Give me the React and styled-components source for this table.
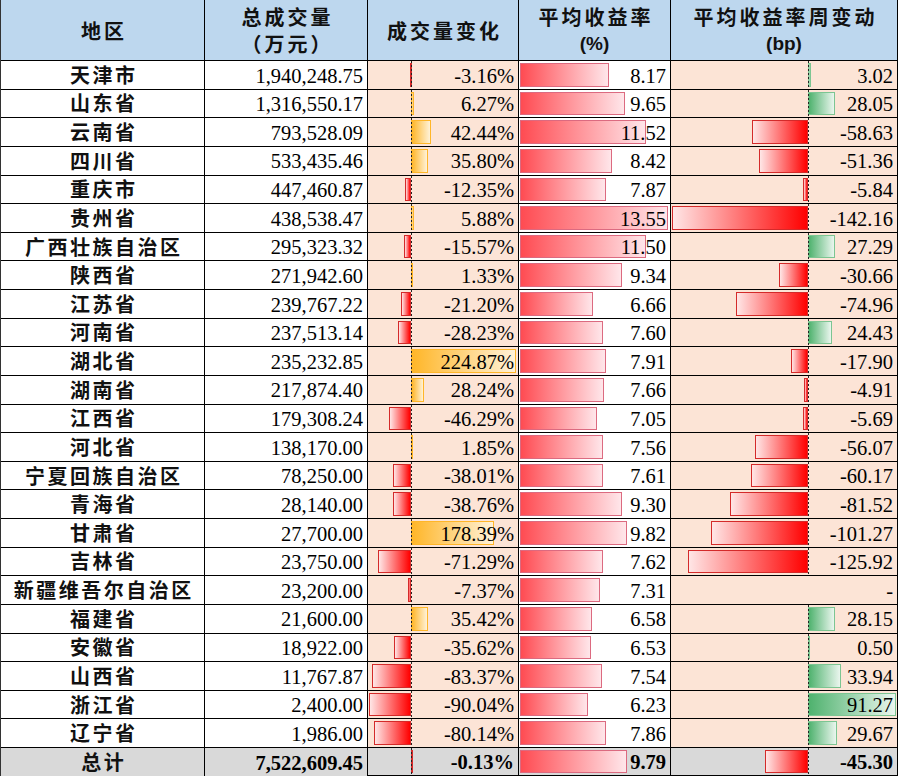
import React from "react";
import styled, { createGlobalStyle } from "styled-components";

const rows = [
	["天津市", "1,940,248.75", -3.16, 8.17, 3.02],
	["山东省", "1,316,550.17", 6.27, 9.65, 28.05],
	["云南省", "793,528.09", 42.44, 11.52, -58.63],
	["四川省", "533,435.46", 35.8, 8.42, -51.36],
	["重庆市", "447,460.87", -12.35, 7.87, -5.84],
	["贵州省", "438,538.47", 5.88, 13.55, -142.16],
	["广西壮族自治区", "295,323.32", -15.57, 11.5, 27.29],
	["陕西省", "271,942.60", 1.33, 9.34, -30.66],
	["江苏省", "239,767.22", -21.2, 6.66, -74.96],
	["河南省", "237,513.14", -28.23, 7.6, 24.43],
	["湖北省", "235,232.85", 224.87, 7.91, -17.9],
	["湖南省", "217,874.40", 28.24, 7.66, -4.91],
	["江西省", "179,308.24", -46.29, 7.05, -5.69],
	["河北省", "138,170.00", 1.85, 7.56, -56.07],
	["宁夏回族自治区", "78,250.00", -38.01, 7.61, -60.17],
	["青海省", "28,140.00", -38.76, 9.3, -81.52],
	["甘肃省", "27,700.00", 178.39, 9.82, -101.27],
	["吉林省", "23,750.00", -71.29, 7.62, -125.92],
	["新疆维吾尔自治区", "23,200.00", -7.37, 7.31, null],
	["福建省", "21,600.00", 35.42, 6.58, 28.15],
	["安徽省", "18,922.00", -35.62, 6.53, 0.5],
	["山西省", "11,767.87", -83.37, 7.54, 33.94],
	["浙江省", "2,400.00", -90.04, 6.23, 91.27],
	["辽宁省", "1,986.00", -80.14, 7.86, 29.67],
];

const total = ["总计", "7,522,609.45", -0.13, 9.79, -45.3];

// bar ranges per column (px inside the cell)
const volScale = { min: -90.04, max: 224.87, start: 1, width: 147 };
const rateScale = { min: 0, max: 13.55, start: 1, width: 148 };
const bpScale = { min: -142.16, max: 91.27, start: 1, width: 224 };

const geom = (v, s) => {
	const span = s.max - s.min;
	const axis = s.start + (s.width * -s.min) / span;
	const w = (Math.abs(v) / span) * s.width;
	return { axis, left: v < 0 ? axis - w : axis, w };
};

const BarCell = ({ value, scale, text, posTone, bg, bold }) => {
	if (value === null) {
		return (
			<Cell $bg={bg} $bold={bold}>
				<Num>-</Num>
			</Cell>
		);
	}
	const g = geom(value, scale);
	return (
		<Cell $bg={bg} $bold={bold}>
			<Bar
				$tone={value < 0 ? "neg" : posTone}
				style={{ left: g.left, width: g.w }}
			/>
			{scale.min < 0 ? <Axis style={{ left: Math.round(g.axis) }} /> : null}
			<Num>{text}</Num>
		</Cell>
	);
};

const DataRow = ({ r, isTotal }) => {
	const bg = isTotal ? "#d9d9d9" : null;
	const peach = isTotal ? "#d9d9d9" : "#fce4d6";
	return (
		<>
			<Cell $bg={bg} $center $last={isTotal}>
				<Region>{r[0]}</Region>
			</Cell>
			<Cell $bg={bg} $bold={isTotal} $last={isTotal}>
				<Num>{r[1]}</Num>
			</Cell>
			<BarCell
				value={r[2]}
				scale={volScale}
				text={`${r[2].toFixed(2)}%`}
				posTone="orange"
				bg={peach}
				bold={isTotal}
			/>
			<BarCell
				value={r[3]}
				scale={rateScale}
				text={r[3].toFixed(2)}
				posTone="rate"
				bg={bg}
				bold={isTotal}
			/>
			<BarCell
				value={r[4]}
				scale={bpScale}
				text={r[4] === null ? "-" : r[4].toFixed(2)}
				posTone="green"
				bg={peach}
				bold={isTotal}
			/>
		</>
	);
};

const App = () => {
	return (
		<>
			<GlobalStyle />
			<Sheet>
				<HeadCell>
					<HeadLine>地区</HeadLine>
				</HeadCell>
				<HeadCell>
					<HeadLine>总成交量</HeadLine>
					<HeadLine>（万元）</HeadLine>
				</HeadCell>
				<HeadCell>
					<HeadLine>成交量变化</HeadLine>
				</HeadCell>
				<HeadCell>
					<HeadLine>平均收益率</HeadLine>
					<HeadUnit>(%)</HeadUnit>
				</HeadCell>
				<HeadCell>
					<HeadLine>平均收益率周变动</HeadLine>
					<HeadUnit>(bp)</HeadUnit>
				</HeadCell>
				{rows.map((r) => (
					<DataRow key={r[0]} r={r} />
				))}
				<DataRow r={total} isTotal />
			</Sheet>
		</>
	);
};

export default App;

const GlobalStyle = createGlobalStyle`
	body {
		margin: 0;
		background: #ffffff;
	}
`;

const Sheet = styled.div`
	display: grid;
	grid-template-columns: 204px 163px 151px 152px 227px;
	grid-template-rows: 61px repeat(24, 28.625px) 28px;
	width: 898px;
	border-left: 1px solid #333;
	box-sizing: border-box;
`;

const HeadCell = styled.div`
	display: flex;
	flex-direction: column;
	align-items: center;
	justify-content: center;
	background: #bdd7ee;
	border-right: 1px solid #000;
	border-bottom: 1px solid #000;
	box-sizing: border-box;
	font-family: "Noto Sans CJK SC", sans-serif;
	font-weight: 700;
	color: #111;
`;

const HeadLine = styled.div`
	font-size: 20px;
	line-height: 27px;
	letter-spacing: 3px;
	padding-left: 3px;
`;

const HeadUnit = styled.div`
	font-family: "Liberation Sans", "Noto Sans CJK SC", sans-serif;
	font-size: 19px;
	line-height: 27px;
`;

const Cell = styled.div`
	position: relative;
	display: flex;
	align-items: center;
	justify-content: ${(p) => (p.$center ? "center" : "flex-end")};
	padding-right: ${(p) => (p.$center ? "0" : "4px")};
	background: ${(p) => p.$bg || "#ffffff"};
	border-right: 1px solid #000;
	border-bottom: ${(p) => (p.$last ? "none" : "1px solid #000")};
	box-sizing: border-box;
	overflow: hidden;
	font-weight: ${(p) => (p.$bold ? 700 : 400)};
`;

const Region = styled.span`
	font-family: "Noto Sans CJK SC", sans-serif;
	font-size: 20px;
	font-weight: 700;
	letter-spacing: 2.5px;
	padding-left: 2.5px;
	line-height: 1;
	color: #111;
`;

const Num = styled.span`
	position: relative;
	z-index: 2;
	font-family: "Liberation Serif", "Times New Roman", serif;
	font-size: 20.5px;
	line-height: 1;
	padding-top: 2px;
	color: #000;
`;

const tones = {
	neg: "linear-gradient(to right, #ffe6e6, #ff0000)",
	orange: "linear-gradient(to right, #ffb628, #fff2d8)",
	rate: "linear-gradient(to right, #ff4b52, #ffe6ea)",
	green: "linear-gradient(to right, #4fb26e, #eaf6ee)",
};

const toneBorders = {
	neg: "#d42a2a",
	orange: "#ffb628",
	rate: "#dc6a80",
	green: "#7cc592",
};

const Bar = styled.div`
	position: absolute;
	top: 2px;
	bottom: 2px;
	box-sizing: border-box;
	background: ${(p) => tones[p.$tone]};
	border: 1px solid ${(p) => toneBorders[p.$tone]};
	z-index: 1;
`;

const Axis = styled.div`
	position: absolute;
	top: 0;
	bottom: 0;
	width: 1px;
	background: repeating-linear-gradient(
		to bottom,
		#222 0 2px,
		transparent 2px 4px
	);
	z-index: 1;
`;
